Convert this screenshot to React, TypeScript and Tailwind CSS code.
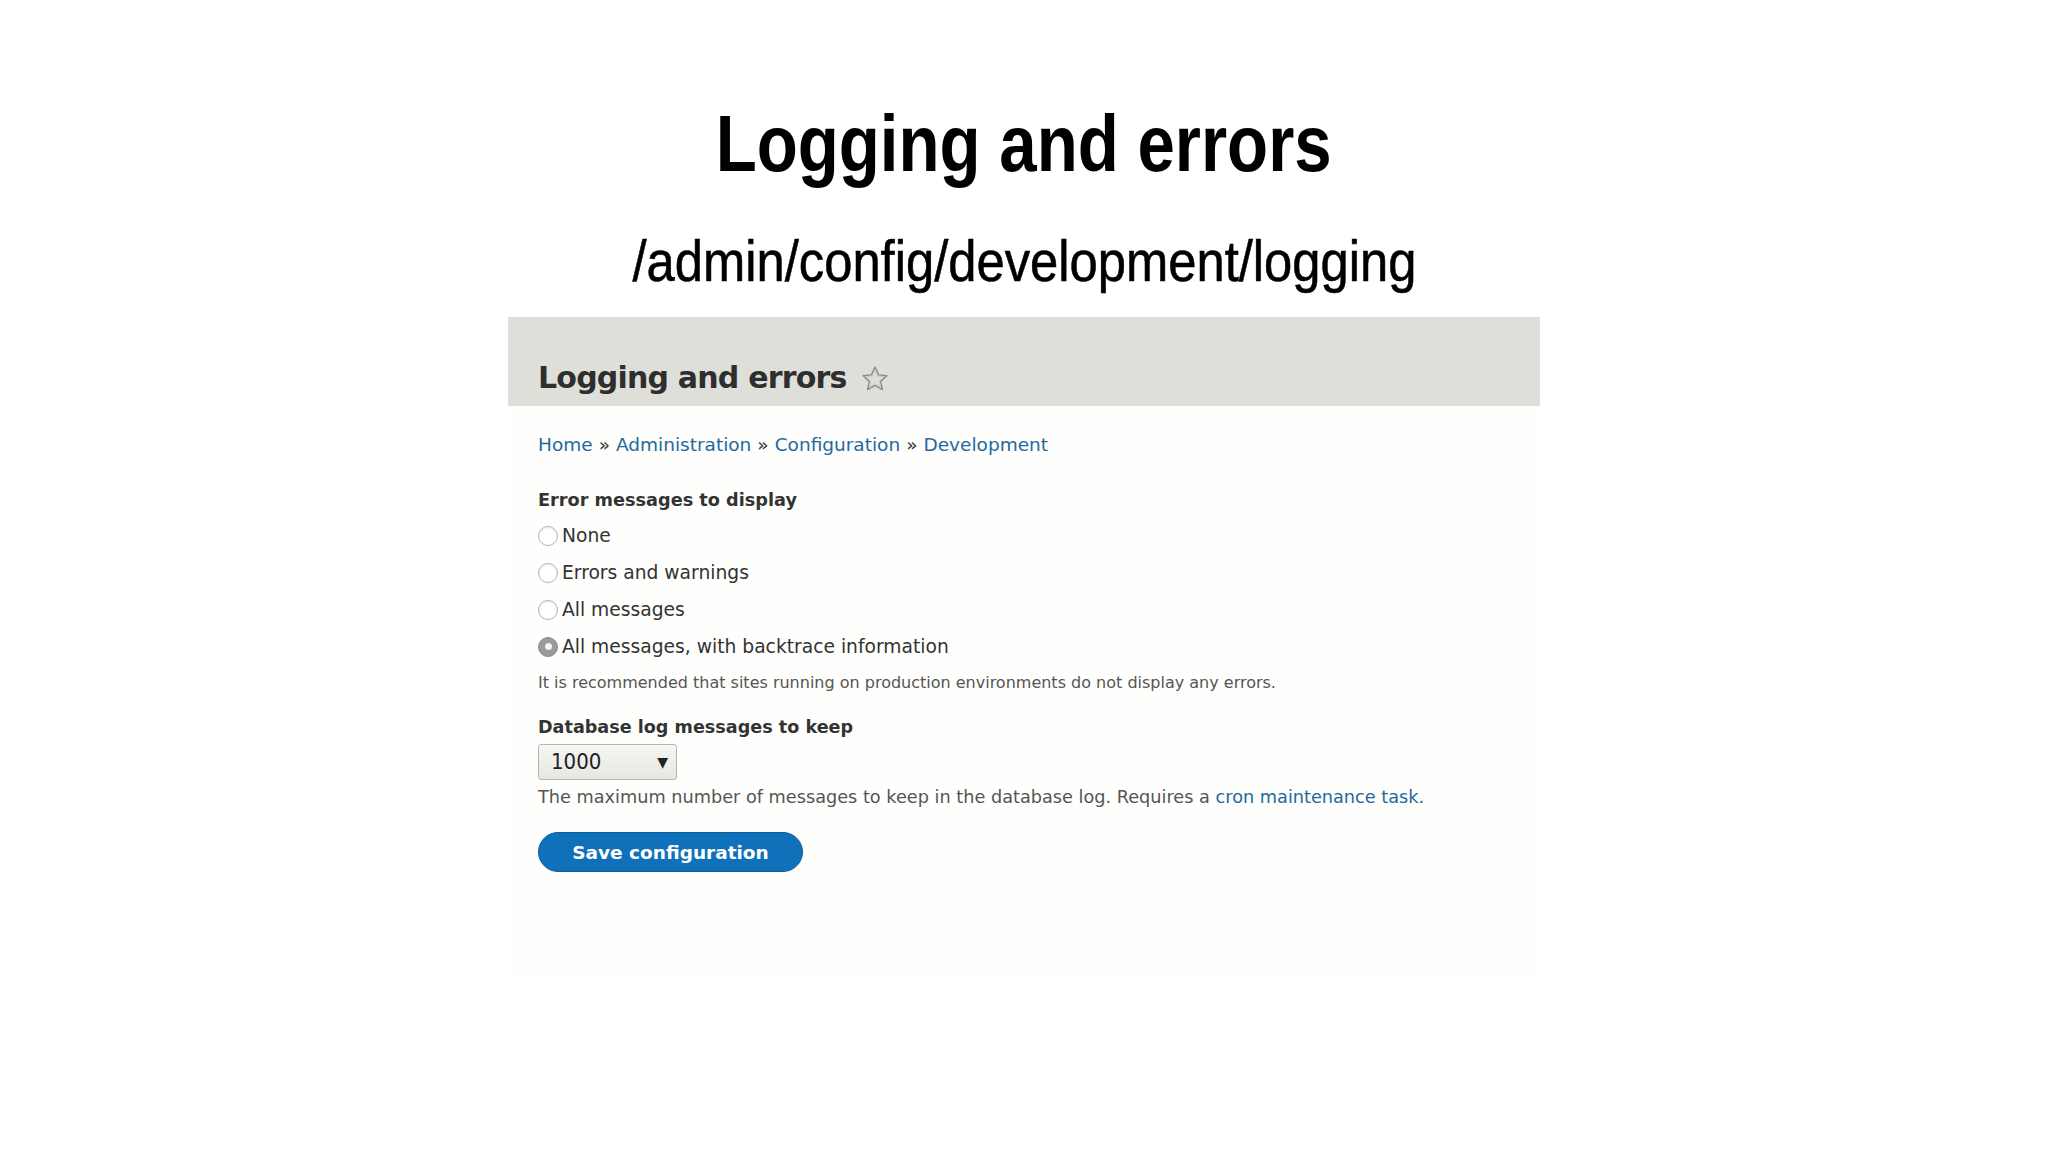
import React from 'react';

const ui = { fontFamily: '"DejaVu Sans", Verdana, sans-serif' };
const gothic = { fontFamily: '"Liberation Sans", Arial, sans-serif' };
const narrow = { fontFamily: '"DejaVu Sans Condensed", "Liberation Sans", sans-serif' };

function Star() {
  return (
    <svg width="30" height="30" viewBox="0 0 24 24" className="ml-[13px] mb-[-1px]">
      <path
        d="M12 2.5l2.9 6.2 6.6.7-5 4.5 1.4 6.6L12 17.1 6.1 20.5l1.4-6.6-5-4.5 6.6-.7z"
        fill="none"
        stroke="#8a8a8a"
        strokeWidth="1.1"
        strokeLinejoin="round"
      />
      <path
        d="M12 5l2.2 4.7 5 .5-3.8 3.4 1.1 5L12 16 7.5 18.6l1.1-5-3.8-3.4 5-.5z"
        fill="none"
        stroke="#c4c4c4"
        strokeWidth="0.7"
        strokeLinejoin="round"
      />
    </svg>
  );
}

function Radio({ label, checked }: { label: string; checked?: boolean }) {
  return (
    <div className="flex h-[37px] items-center">
      {checked ? (
        <span className="flex h-[20px] w-[20px] items-center justify-center rounded-full border border-[#8c8c8c] bg-[#9a9a9a]">
          <span className="h-[7px] w-[7px] rounded-full bg-[#f2f2f2]" />
        </span>
      ) : (
        <span className="h-[20px] w-[20px] rounded-full border border-[#b3b3b3] bg-white shadow-[inset_0_1px_2px_rgba(0,0,0,0.08)]" />
      )}
      <span className="ml-[4px] text-[18.7px] leading-[24px] text-[#333]">{label}</span>
    </div>
  );
}

export default function App() {
  return (
    <div className="flex min-h-screen flex-col items-center bg-white">
      <h1 style={gothic} className="mt-[104px] scale-x-[0.84] text-[80px] font-bold leading-none text-black">
        Logging and errors
      </h1>
      <h2 style={gothic} className="mt-[49px] scale-x-[0.89] text-[57px] font-normal leading-none text-black [-webkit-text-stroke:0.6px_black]">
        /admin/config/development/logging
      </h2>

      <div style={ui} className="mt-[27px] flex w-[1032px] flex-col">
        <div className="flex h-[89px] items-end bg-[#dfdfd9] px-[30px] pb-[13px]">
          <span className="text-[30px] font-bold leading-none tracking-[-0.8px] text-[#2e2e2e]">Logging and errors</span>
          <Star />
        </div>

        <div className="flex h-[567px] flex-col bg-[#fefefc] px-[30px] pt-[27px]">
          <nav className="flex h-[24px] items-center gap-[6px] text-[18.5px] text-[#24699e]">
            <span>Home</span>
            <span className="text-[#333]">»</span>
            <span>Administration</span>
            <span className="text-[#333]">»</span>
            <span>Configuration</span>
            <span className="text-[#333]">»</span>
            <span>Development</span>
          </nav>

          <div className="mt-[31px] h-[24px] text-[17.7px] font-bold leading-[24px] text-[#333]">
            Error messages to display
          </div>
          <div className="mt-[5px] flex flex-col">
            <Radio label="None" />
            <Radio label="Errors and warnings" />
            <Radio label="All messages" />
            <Radio label="All messages, with backtrace information" checked />
          </div>
          <p className="mt-[8px] text-[16px] leading-[20px] text-[#555]">
            It is recommended that sites running on production environments do not display any errors.
          </p>

          <div className="mt-[22px] h-[24px] text-[17.6px] font-bold leading-[24px] text-[#333]">
            Database log messages to keep
          </div>
          <div className="mt-[5px] flex h-[36px] w-[139px] items-center justify-between rounded-[3px] border border-[#b4b4b0] bg-gradient-to-b from-[#f6f6f4] to-[#e6e6e2] pl-[12px] pr-[8px]">
            <span style={narrow} className="text-[22px] leading-none text-[#222]">1000</span>
            <span className="text-[14px] leading-none text-[#222]">▼</span>
          </div>
          <p className="mt-[5px] text-[17.7px] leading-[24px] text-[#555]">
            The maximum number of messages to keep in the database log. Requires a{' '}
            <span className="text-[#24699e]">cron maintenance task</span>.
          </p>

          <div className="mt-[23px]">
            <button className="flex h-[40px] w-[265px] items-center justify-center rounded-full border border-[#0b5f9e] bg-[#1071bb] pt-[1px] text-[18.5px] font-bold text-white">
              Save configuration
            </button>
          </div>
        </div>
      </div>
    </div>
  );
}
